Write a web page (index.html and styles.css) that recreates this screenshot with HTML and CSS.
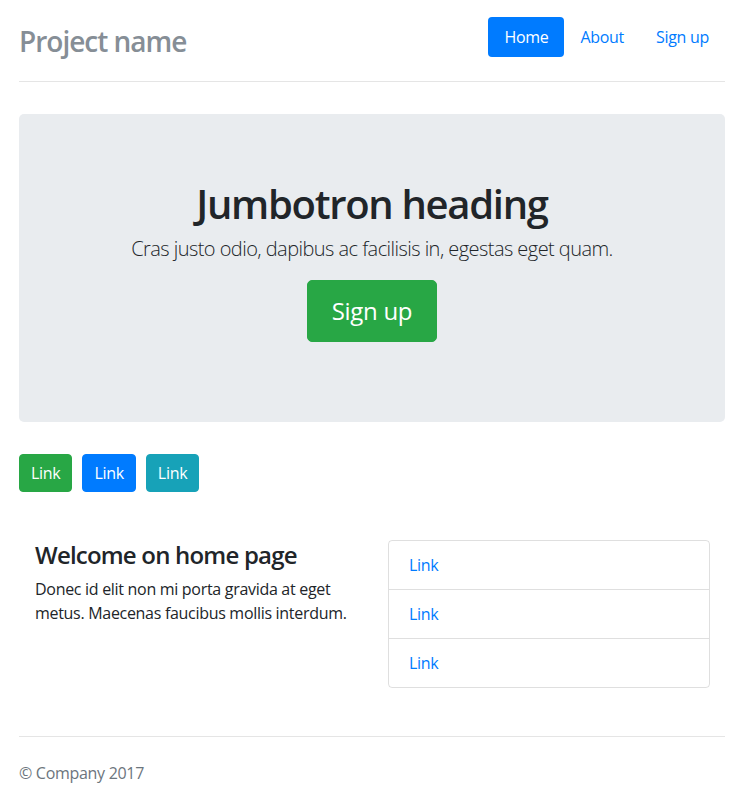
FILE: index.html
```html
<!DOCTYPE html>
<html lang="en">
<head>
<meta charset="utf-8">
<title>Narrow Jumbotron</title>
<link rel="stylesheet" href="styles.css">
</head>
<body>
<div class="container">
  <header class="header">
    <h3 class="brand">Project name</h3>
    <nav class="nav">
      <a class="nav-link active" href="#">Home</a>
      <a class="nav-link" href="#">About</a>
      <a class="nav-link" href="#">Sign up</a>
    </nav>
  </header>

  <section class="jumbotron">
    <h1 class="jumbo-title">Jumbotron heading</h1>
    <p class="lead">Cras justo odio, dapibus ac facilisis in, egestas eget quam.</p>
    <p class="jumbo-action"><a class="btn btn-lg btn-success" href="#">Sign up</a></p>
  </section>

  <div class="btn-row">
    <a class="btn btn-success" href="#">Link</a>
    <a class="btn btn-primary" href="#">Link</a>
    <a class="btn btn-info" href="#">Link</a>
  </div>

  <div class="marketing">
    <div class="col">
      <h4 class="welcome">Welcome on home page</h4>
      <p class="text">Donec id elit non mi porta gravida at eget metus. Maecenas faucibus mollis interdum.</p>
    </div>
    <div class="col">
      <ul class="list-group">
        <li class="list-item"><a href="#">Link</a></li>
        <li class="list-item"><a href="#">Link</a></li>
        <li class="list-item"><a href="#">Link</a></li>
      </ul>
    </div>
  </div>

  <footer class="footer">
    <p>&copy; Company 2017</p>
  </footer>
</div>
</body>
</html>
```

FILE: styles.css
```css
* { box-sizing: border-box; }

html, body {
  margin: 0;
  padding: 0;
}

body {
  font-family: "Open Sans", "Noto Sans", sans-serif;
  font-size: 16px;
  line-height: 1.5;
  letter-spacing: -0.3px;
  color: #212529;
  background: #fff;
}

a { color: #007bff; text-decoration: none; }

.container {
  padding: 17px 18px 0 19px;
}

.header {
  display: flex;
  justify-content: space-between;
  align-items: flex-start;
  padding-bottom: 16px;
  border-bottom: 1px solid #e5e5e5;
  margin-bottom: 32px;
}

.brand {
  margin: 0;
  font-size: 28px;
  font-weight: 600;
  line-height: 48px;
  letter-spacing: -1px;
  color: #868e96;
}

.nav {
  display: flex;
}

.nav-link {
  display: block;
  padding: 8px 16px;
  line-height: 24px;
  border-radius: 4px;
}

.nav-link.active {
  background: #007bff;
  color: #fff;
}

.jumbotron {
  background: #e9ecef;
  border-radius: 5px;
  padding: 66px 32px 64px;
  text-align: center;
  margin-bottom: 32px;
}

.jumbo-title {
  margin: 0 0 6px;
  font-size: 40px;
  font-weight: 600;
  line-height: 48px;
  letter-spacing: -1.3px;
}

.lead {
  margin: 0 0 16px;
  font-size: 20px;
  font-weight: 300;
  line-height: 30px;
  letter-spacing: -0.55px;
}

.jumbo-action {
  margin: 0 0 16px;
  line-height: 0;
}

.btn {
  display: inline-block;
  border: 1px solid transparent;
  border-radius: 4px;
  padding: 6px 11px;
  font-size: 16px;
  line-height: 24px;
  color: #fff;
}

.btn-lg {
  padding: 12px 24px;
  font-size: 24px;
  line-height: 36px;
  border-radius: 5px;
}

.btn-success { background: #28a745; border-color: #28a745; }
.btn-primary { background: #007bff; border-color: #007bff; }
.btn-info { background: #17a2b8; border-color: #17a2b8; }

.btn-row {
  display: flex;
  gap: 10px;
}

.marketing {
  display: flex;
  margin: 48px 0;
}

.col {
  flex: 1 1 0;
  padding: 0 15px 0 16px;
}

.welcome {
  margin: 0 0 8px;
  font-size: 24px;
  font-weight: 600;
  line-height: 29px;
  letter-spacing: -0.8px;
}

.text {
  margin: 0;
}

.list-group {
  list-style: none;
  margin: 0;
  padding: 0;
  border: 1px solid rgba(0,0,0,.125);
  border-radius: 4px;
}

.list-item {
  padding: 12px 20px;
  line-height: 24px;
  border-top: 1px solid rgba(0,0,0,.125);
}

.list-item:first-child { border-top: none; }

.footer {
  border-top: 1px solid #e5e5e5;
  padding-top: 24px;
  color: #6c757d;
}

.footer p { margin: 0 0 16px; }
```
